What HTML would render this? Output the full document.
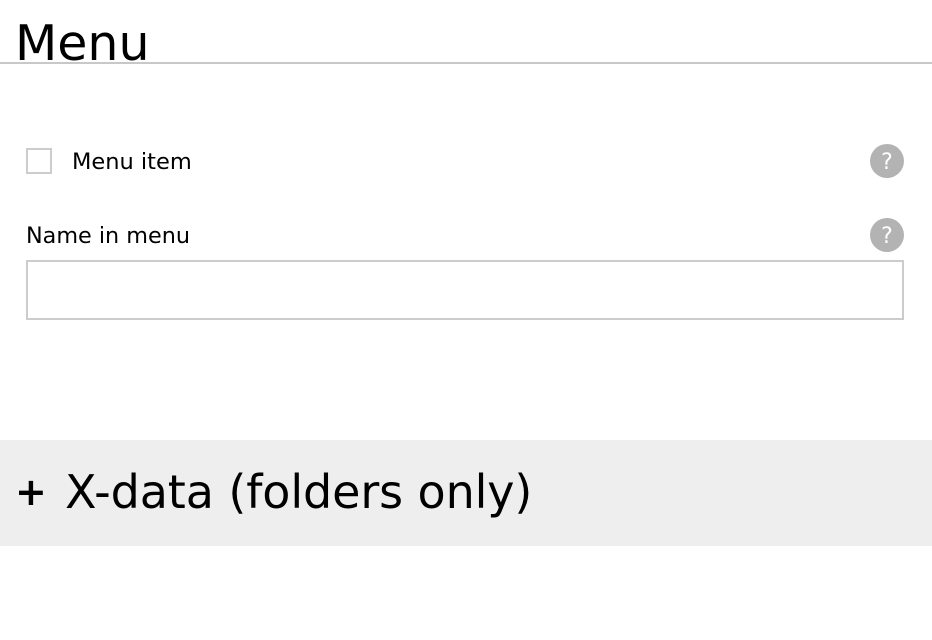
<!DOCTYPE html>
<html><head><style>
body{margin:0;width:932px;height:640px;background:#fff;font-family:"DejaVu Sans",sans-serif;color:#000;position:relative;overflow:hidden}
.a{position:absolute;white-space:nowrap}
.q{position:absolute;width:34px;height:34px;border-radius:50%;background:#b3b3b3;color:#fff;font-size:22px;line-height:38px;text-align:center;left:870px}
</style></head><body>
<div class="a" style="left:15px;top:11px;font-size:49px;line-height:66px">Menu</div>
<div class="a" style="left:0;top:62px;width:932px;height:2px;background:#c8c8c8"></div>
<div class="a" style="left:26px;top:148px;width:22px;height:22px;border:2px solid #ccc"></div>
<div class="a" style="left:72px;top:147px;font-size:22.5px;line-height:30px">Menu item</div>
<div class="q" style="top:144px">?</div>
<div class="a" style="left:26px;top:221px;font-size:22.3px;line-height:30px">Name in menu</div>
<div class="q" style="top:218px">?</div>
<div class="a" style="left:26px;top:260px;width:874px;height:56px;border:2px solid #ccc"></div>
<div class="a" style="left:0;top:440px;width:932px;height:106px;background:#eee"></div>
<div class="a" style="left:15px;top:462px;font-size:38px;line-height:60px;font-weight:bold">+</div>
<div class="a" style="left:65px;top:462px;font-size:46px;line-height:60px;letter-spacing:-0.1px">X-data (folders only)</div>
</body></html>
